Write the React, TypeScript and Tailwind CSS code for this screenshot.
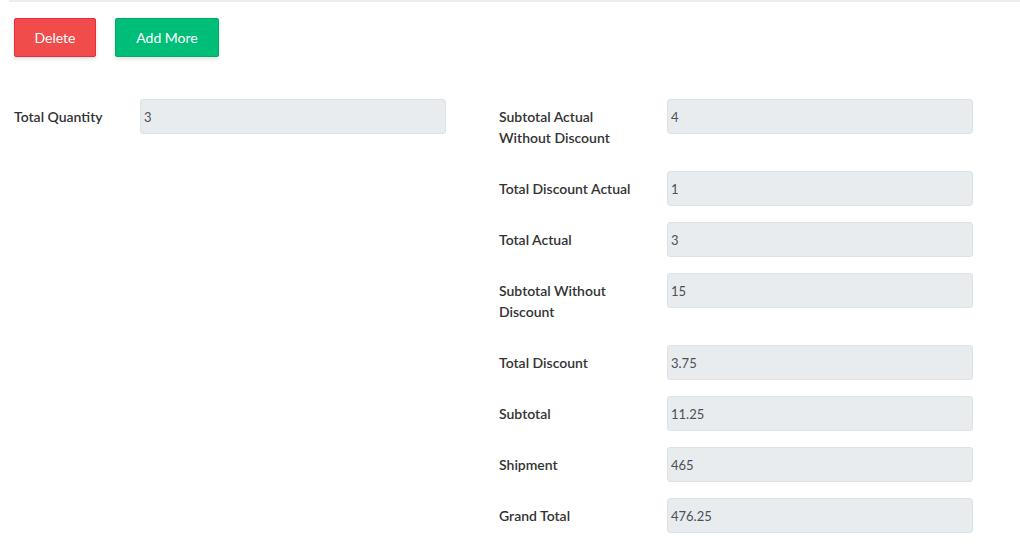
const font = { fontFamily: '"Lato", "Open Sans", "Noto Sans", sans-serif' };

const Field = ({ label, value, labelWidth }: { label: string; value: string; labelWidth: string }) => (
  <div className="flex items-start mb-4">
    <label className={`${labelWidth} py-[7px] pr-[28px] text-[14px] leading-[21px] font-semibold text-[#333]`}>{label}</label>
    <div className="w-[306px] h-[35px] flex items-center px-[3px] pt-[2px] bg-[#e9ecef] border border-[#dde2e6] rounded-[3px] text-[13px] text-[#495057]">
      {value}
    </div>
  </div>
);

const rightFields = [
  ['Subtotal Actual Without Discount', '4'],
  ['Total Discount Actual', '1'],
  ['Total Actual', '3'],
  ['Subtotal Without Discount', '15'],
  ['Total Discount', '3.75'],
  ['Subtotal', '11.25'],
  ['Shipment', '465'],
  ['Grand Total', '476.25'],
];

export default function App() {
  return (
    <div className="w-[1020px] h-[560px] bg-white overflow-hidden" style={font}>
      {/* top rule */}
      <div className="ml-[9px] h-[2px] bg-[#ececec]" />

      {/* actions */}
      <div className="flex gap-[19px] pl-[14px] pt-4">
        <button className="w-[82px] h-[39px] bg-[#f14c4c] border border-[#ef2a3a] rounded-[2px] text-white text-[14px] shadow-[0_2px_4px_rgba(0,0,0,0.12)]">
          Delete
        </button>
        <button className="w-[104px] h-[39px] bg-[#00bd78] border border-[#00ad62] rounded-[2px] text-white text-[14px] shadow-[0_2px_4px_rgba(0,0,0,0.12)]">
          Add More
        </button>
      </div>

      <div className="flex pl-[14px] pt-[42px]">
        <div className="w-[485px]">
          <Field label="Total Quantity" value="3" labelWidth="w-[126px]" />
        </div>
        <div>
          {rightFields.map(([l, v]) => (
            <Field key={l} label={l} value={v} labelWidth="w-[168px]" />
          ))}
        </div>
      </div>
    </div>
  );
}
